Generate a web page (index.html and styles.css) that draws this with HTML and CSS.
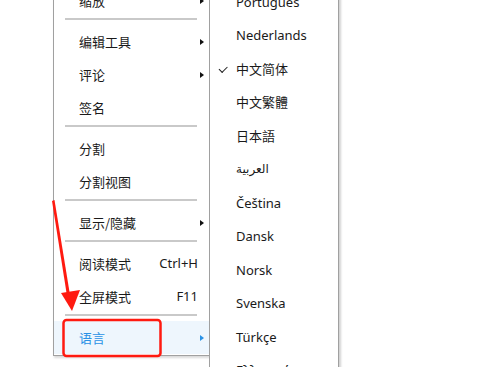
FILE: index.html
```html
<!DOCTYPE html>
<html>
<head>
<meta charset="utf-8">
<title>语言菜单</title>
<link rel="stylesheet" href="styles.css">
</head>
<body>
    <div class="stage">
        <div class="menu main-menu">
            <div class="item">缩放<span class="arrow"></span></div>
            <div class="sep"></div>
            <div class="item">编辑工具<span class="arrow"></span></div>
            <div class="item">评论<span class="arrow"></span></div>
            <div class="item">签名</div>
            <div class="sep"></div>
            <div class="item">分割</div>
            <div class="item">分割视图</div>
            <div class="sep"></div>
            <div class="item">显示/隐藏<span class="arrow"></span></div>
            <div class="sep"></div>
            <div class="item">阅读模式<span class="key">Ctrl+H</span></div>
            <div class="item">全屏模式<span class="key">F11</span></div>
            <div class="sep"></div>
            <div class="item active">语言<span class="arrow"></span></div>
        </div>

        <div class="menu sub-menu">
            <div class="lang">Português</div>
            <div class="lang">Nederlands</div>
            <div class="lang checked">中文简体</div>
            <div class="lang">中文繁體</div>
            <div class="lang">日本語</div>
            <div class="lang arabic">العربية</div>
            <div class="lang">Čeština</div>
            <div class="lang">Dansk</div>
            <div class="lang">Norsk</div>
            <div class="lang">Svenska</div>
            <div class="lang">Türkçe</div>
            <div class="lang">Ελληνικά</div>
        </div>

        <!-- red annotation -->
        <svg class="mark" width="489" height="367" viewBox="0 0 489 367">
            <polygon points="52,201 54.5,200 70,295 67,296" fill="#ff1a10"/>
            <polygon points="61,293 80,290 72,311" fill="#ff1a10"/>
            <rect x="63.5" y="320" width="97" height="36" rx="3" fill="none" stroke="#ff1a10" stroke-width="2.5"/>
        </svg>
    </div>
</body>
</html>
```

FILE: styles.css
```css
:root {
    --border: #a0a0a0;
    --sep: #c9c9c9;
    --text: #1a1a1a;
    --hover-bg: #eef6fd;
    --hover-text: #2a92e6;
}

body {
    margin: 0;
    background: #fff;
    font-family: "Noto Sans", "Noto Sans CJK SC", sans-serif;
    font-size: 13px;
    color: var(--text);
    overflow: hidden;
}

.stage {
    position: relative;
    display: flex;
    align-items: flex-start;
    width: 489px;
    height: 367px;
    padding-left: 53px;
    box-sizing: border-box;
    overflow: hidden;
}

.menu {
    background: #fff;
    border: 1px solid var(--border);
    box-sizing: border-box;
}

.main-menu {
    width: 157px;
    margin-top: -17.5px;
    padding: 0 0 1px 0;
    box-shadow: 1px 2px 2px rgba(0, 0, 0, 0.15);
    font-family: "Noto Sans CJK SC", sans-serif;
}

.item {
    position: relative;
    height: 33px;
    line-height: 33px;
    padding-left: 25px;
}

.item.active {
    background: var(--hover-bg);
    color: var(--hover-text);
}

.arrow {
    position: absolute;
    right: 5px;
    top: 14px;
    border-left: 4px solid #111;
    border-top: 3.5px solid transparent;
    border-bottom: 3.5px solid transparent;
}

.item.active .arrow {
    border-left-color: var(--hover-text);
}

.key {
    position: absolute;
    right: 11px;
    font-family: "Noto Sans", sans-serif;
}

.sep {
    height: 2px;
    margin: 1px 12px 5px 11px;
    background: var(--sep);
}

.sub-menu {
    position: relative;
    z-index: 1;
    width: 130px;
    margin-left: -1px;
    margin-top: -15.25px;
    box-shadow: 2px 0 2px rgba(0, 0, 0, 0.18);
    height: 390px;
}

.lang {
    position: relative;
    height: 33.5px;
    line-height: 33.5px;
    padding-left: 26px;
}

.lang.checked::before {
    content: "";
    position: absolute;
    left: 9px;
    top: 13px;
    width: 7px;
    height: 3.5px;
    border-left: 1.5px solid #222;
    border-bottom: 1.5px solid #222;
    transform: rotate(-45deg);
}

.arabic {
    font-family: "DejaVu Sans", sans-serif;
    font-size: 12px;
}

.mark {
    position: absolute;
    left: 0;
    top: 0;
    z-index: 2;
    pointer-events: none;
}
```
